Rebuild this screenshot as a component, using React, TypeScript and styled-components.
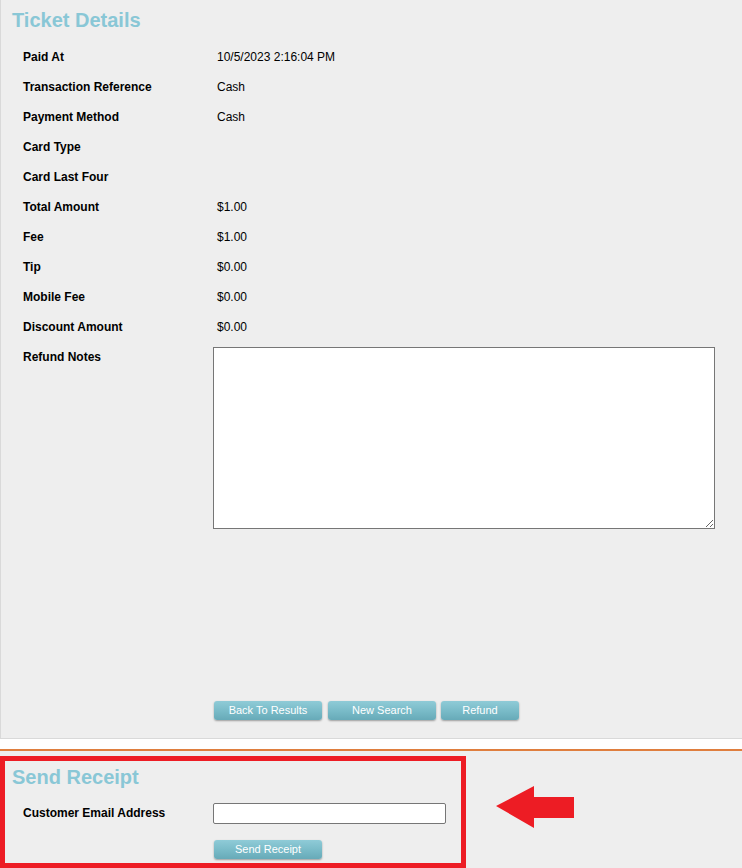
import React from "react";
import styled, { createGlobalStyle } from "styled-components";

const GlobalStyle = createGlobalStyle`
  html, body {
    margin: 0;
    padding: 0;
    background: #ffffff;
    font-family: "Liberation Sans", Arial, sans-serif;
  }
`;

const Page = styled.div`
  width: 742px;
  overflow: hidden;
`;

const DetailsPanel = styled.section`
  box-sizing: border-box;
  height: 739px;
  display: flex;
  flex-direction: column;
  background: #eeeeee;
  border-left: 1px solid #d9d9d9;
  border-bottom: 1px solid #d9d9d9;
  padding-bottom: 18px;
`;

const Title = styled.h2`
  margin: ${({ $top }: { $top: number }) => $top}px 0 0 11px;
  font-size: 20px;
  line-height: 24px;
  font-weight: bold;
  color: #89c7d6;
`;

const DetailsGrid = styled.div`
  display: grid;
  grid-template-columns: 190px 502px;
  margin-top: 10px;
  padding-left: 22px;
`;

const Label = styled.div`
  font-size: 12px;
  font-weight: bold;
  line-height: 30px;
  color: #000;
`;

const Value = styled.div`
  font-size: 12px;
  line-height: 30px;
  min-height: 30px;
  padding-left: 4px;
  color: #000;
`;

const NotesCell = styled.div`
  padding-top: 5px;
`;

const NotesArea = styled.textarea`
  box-sizing: border-box;
  display: block;
  width: 502px;
  height: 182px;
  margin: 0;
  border: 1px solid #767676;
  border-radius: 0;
  background: #fff;
  resize: both;
`;

const ButtonRow = styled.div`
  display: flex;
  gap: 6px;
  margin-top: ${({ $top }: { $top?: number }) =>
    $top === undefined ? "auto" : `${$top}px`};
  padding-left: ${({ $left }: { $left: number }) => $left}px;
`;

const ActionButton = styled.button`
  box-sizing: border-box;
  width: ${({ $width }: { $width: number }) => $width}px;
  height: 19px;
  padding: 0;
  border: none;
  border-radius: 3px;
  background: linear-gradient(#8fcbd7 0%, #78bac7 55%, #67aab8 100%);
  box-shadow: 0 1px 2px rgba(0, 0, 0, 0.35);
  color: #ffffff;
  font-family: "Liberation Sans", Arial, sans-serif;
  font-size: 11px;
  line-height: 19px;
  text-align: center;

  &:last-child:not(:first-child) {
    margin-left: -1px;
  }
`;

const Separator = styled.div`
  margin-top: 10px;
  border-top: 2px solid #df7e3e;
`;

const ReceiptArea = styled.div`
  display: flex;
  align-items: flex-start;
  background: #eeeeee;
  padding-top: 5px;
`;

const ReceiptBox = styled.section`
  box-sizing: border-box;
  width: 466px;
  height: 112px;
  border: 5px solid #ed1c24;
  display: flex;
  flex-direction: column;
`;

const ReceiptTitle = styled(Title)`
  margin-left: 7px;
`;

const EmailRow = styled.div`
  display: grid;
  grid-template-columns: 190px 233px;
  align-items: center;
  margin-top: 9px;
  padding-left: 18px;
`;

const EmailInput = styled.input`
  box-sizing: border-box;
  width: 233px;
  height: 21px;
  margin: 0;
  border: 1px solid #767676;
  border-radius: 2px;
  background: #fff;
`;

const Pointer = styled.svg`
  margin: 30px 0 0 30px;
  display: block;
`;

const details: [string, string][] = [
  ["Paid At", "10/5/2023 2:16:04 PM"],
  ["Transaction Reference", "Cash"],
  ["Payment Method", "Cash"],
  ["Card Type", ""],
  ["Card Last Four", ""],
  ["Total Amount", "$1.00"],
  ["Fee", "$1.00"],
  ["Tip", "$0.00"],
  ["Mobile Fee", "$0.00"],
  ["Discount Amount", "$0.00"],
];

export default function App() {
  return (
    <Page>
      <GlobalStyle />
      <DetailsPanel>
        <Title $top={8}>Ticket Details</Title>
        <DetailsGrid>
          {details.map(([label, value]) => (
            <React.Fragment key={label}>
              <Label>{label}</Label>
              <Value>{value}</Value>
            </React.Fragment>
          ))}
          <Label>Refund Notes</Label>
          <NotesCell>
            <NotesArea />
          </NotesCell>
        </DetailsGrid>
        <ButtonRow $left={213}>
          <ActionButton $width={108}>Back To Results</ActionButton>
          <ActionButton $width={108}>New Search</ActionButton>
          <ActionButton $width={78}>Refund</ActionButton>
        </ButtonRow>
      </DetailsPanel>
      <Separator />
      <ReceiptArea>
        <ReceiptBox>
          <ReceiptTitle $top={4}>Send Receipt</ReceiptTitle>
          <EmailRow>
            <Label>Customer Email Address</Label>
            <EmailInput type="text" />
          </EmailRow>
          <ButtonRow $top={12} $left={209}>
            <ActionButton $width={108}>Send Receipt</ActionButton>
          </ButtonRow>
        </ReceiptBox>
        <Pointer width="78" height="42" viewBox="0 0 78 42">
          <polygon
            points="0,20 38,0 38,11 78,11 78,32 38,32 38,42"
            fill="#ed1c24"
          />
        </Pointer>
      </ReceiptArea>
    </Page>
  );
}
